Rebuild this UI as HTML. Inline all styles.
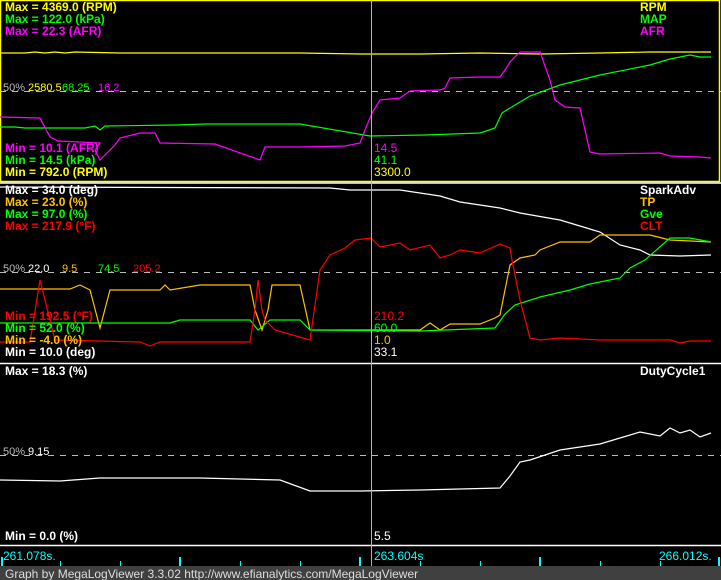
<!DOCTYPE html>
<html><head><meta charset="utf-8"><style>
html,body{margin:0;padding:0;background:#000;width:721px;height:580px;overflow:hidden}
svg{display:block}
text{font-family:"Liberation Sans",Arial,sans-serif;font-size:12px}
.b{font-weight:bold}
.s{font-size:11px}
</style></head><body>
<svg width="721" height="580" viewBox="0 0 721 580" xmlns="http://www.w3.org/2000/svg">
<rect width="721" height="580" fill="#000"/>
<rect x="0.5" y="0.5" width="719" height="181" fill="none" stroke="#ffff00" stroke-width="1.5"/>
<line x1="0" y1="183" x2="721" y2="183" stroke="#fff" stroke-width="1.5"/>
<line x1="0" y1="363.5" x2="721" y2="363.5" stroke="#fff" stroke-width="1.5"/>
<line x1="0" y1="545.5" x2="721" y2="545.5" stroke="#fff" stroke-width="1.5"/>
<g stroke="#bbb" stroke-dasharray="6,6" stroke-width="1" shape-rendering="crispEdges">
<line x1="0" y1="91.5" x2="721" y2="91.5"/>
<line x1="0" y1="272.5" x2="721" y2="272.5"/>
<line x1="0" y1="455.5" x2="721" y2="455.5"/>
</g>
<g fill="none" stroke-width="1.2">
<polyline stroke="#ffff00" points="0,53 25,53 35,52 45,53 55,52 65,53 75,52 120,53 180,53 300,53 360,54 420,54 480,53 540,54 600,53 650,52 680,52 711,52"/>
<polyline stroke="#00ff00" points="0,127 15,127 25,128 85,128 95,126 100,130 105,126 175,125 205,124 300,124 370,136 425,135 480,133 495,128 502,113 510,108 530,96 560,85 600,75 650,65 670,59 690,55 700,57 711,57"/>
<polyline stroke="#ff00ff" points="0,117 40,118 50,137 58,141 100,143 95,150 100,160 115,145 120,138 140,133 155,133 160,143 215,144 260,160 265,147 300,147 345,146 360,143 365,130 372,113 380,100 400,98 410,91 440,90 445,88 450,78 480,77 500,77 505,70 510,62 520,52 540,52 550,80 555,100 565,107 580,108 590,152 600,154 660,153 670,156 700,157 711,158"/>
<polyline stroke="#ffffff" points="0,187 330,188 350,190 400,190 420,193 440,196 460,202 480,205 500,208 520,213 560,220 580,226 600,232 620,245 640,250 650,255 680,256 711,255"/>
<polyline stroke="#ffc000" points="0,289 70,289 80,285 90,290 100,328 110,290 160,290 165,285 170,290 200,285 250,285 255,310 262,330 268,310 272,285 300,285 310,330 420,330 430,323 440,330 450,324 480,324 495,318 500,315 510,265 520,258 535,255 540,250 560,242 590,242 600,235 650,235 670,240 711,242"/>
<polyline stroke="#00ff00" points="0,323 170,323 180,320 250,320 258,330 270,320 300,320 310,330 420,331 495,328 505,314 515,305 540,297 570,290 590,284 620,278 630,268 645,260 670,238 690,238 711,242"/>
<polyline stroke="#ff0000" points="0,342 30,342 40,280 45,300 55,340 140,342 150,346 160,342 250,342 255,310 258,280 262,310 265,320 275,330 310,340 320,270 330,255 345,248 355,240 371,238 380,247 400,243 410,250 430,245 440,258 450,255 460,250 480,253 500,244 510,248 512,260 520,300 530,338 540,340 560,338 600,340 670,340 680,343 690,341 711,341"/>
<polyline stroke="#ffffff" points="0,480 60,481 100,478 200,478 280,480 310,491 360,491 420,490 500,488 510,476 520,462 530,460 560,450 600,444 620,438 640,432 660,436 670,428 680,433 690,430 700,437 711,433"/>
</g>
<rect x="371" y="0" width="1" height="566" fill="#00ffff"/>
<text x="5" y="11" class="b" fill="#ffff00">Max = 4369.0 (RPM)</text>
<text x="5" y="23" class="b" fill="#00ff00">Max = 122.0 (kPa)</text>
<text x="5" y="35" class="b" fill="#ff00ff">Max = 22.3 (AFR)</text>
<text x="640" y="11" class="b" fill="#ffff00">RPM</text>
<text x="640" y="23" class="b" fill="#00ff00">MAP</text>
<text x="640" y="35" class="b" fill="#ff00ff">AFR</text>
<text x="3" y="91" class="s" fill="#bbb">50%</text>
<text x="28" y="91" class="s" fill="#ffff00">2580.5</text>
<text x="62" y="91" class="s" fill="#00ff00">68.25</text>
<text x="98" y="91" class="s" fill="#ff00ff">16.2</text>
<text x="5" y="152" class="b" fill="#ff00ff">Min = 10.1 (AFR)</text>
<text x="5" y="164" class="b" fill="#00ff00">Min = 14.5 (kPa)</text>
<text x="5" y="176" class="b" fill="#ffff00">Min = 792.0 (RPM)</text>
<text x="374" y="152" fill="#ff00ff">14.5</text>
<text x="374" y="164" fill="#00ff00">41.1</text>
<text x="374" y="176" fill="#ffff00">3300.0</text>
<text x="5" y="194" class="b" fill="#fff">Max = 34.0 (deg)</text>
<text x="5" y="206" class="b" fill="#ffc000">Max = 23.0 (%)</text>
<text x="5" y="218" class="b" fill="#00ff00">Max = 97.0 (%)</text>
<text x="5" y="230" class="b" fill="#ff0000">Max = 217.9 (°F)</text>
<text x="640" y="194" class="b" fill="#fff">SparkAdv</text>
<text x="640" y="206" class="b" fill="#ffc000">TP</text>
<text x="640" y="218" class="b" fill="#00ff00">Gve</text>
<text x="640" y="230" class="b" fill="#ff0000">CLT</text>
<text x="3" y="272" class="s" fill="#bbb">50%</text>
<text x="28" y="272" class="s" fill="#fff">22.0</text>
<text x="62" y="272" class="s" fill="#ffc000">9.5</text>
<text x="98" y="272" class="s" fill="#00ff00">74.5</text>
<text x="133" y="272" class="s" fill="#ff0000">205.2</text>
<text x="5" y="320" class="b" fill="#ff0000">Min = 192.5 (°F)</text>
<text x="5" y="332" class="b" fill="#00ff00">Min = 52.0 (%)</text>
<text x="5" y="344" class="b" fill="#ffc000">Min = -4.0 (%)</text>
<text x="5" y="356" class="b" fill="#fff">Min = 10.0 (deg)</text>
<text x="374" y="320" fill="#ff0000">210.2</text>
<text x="374" y="332" fill="#00ff00">60.0</text>
<text x="374" y="344" fill="#ffc000">1.0</text>
<text x="374" y="356" fill="#fff">33.1</text>
<text x="5" y="375" class="b" fill="#fff">Max = 18.3 (%)</text>
<text x="640" y="375" class="b" fill="#fff">DutyCycle1</text>
<text x="3" y="455" class="s" fill="#bbb">50%</text>
<text x="28" y="455" class="s" fill="#fff">9.15</text>
<text x="5" y="540" class="b" fill="#fff">Min = 0.0 (%)</text>
<text x="374" y="540" fill="#fff">5.5</text>
<text x="3" y="560" fill="#00ffff">261.078s.</text>
<text x="374" y="560" fill="#00ffff">263.604s</text>
<text x="659" y="560" fill="#00ffff">266.012s.</text>
<g fill="#00ffff">
<rect x="1" y="557" width="2" height="9"/>
<rect x="60" y="561" width="1" height="5"/>
<rect x="120" y="561" width="1" height="5"/>
<rect x="179" y="557" width="2" height="9"/>
<rect x="240" y="561" width="1" height="5"/>
<rect x="300" y="561" width="1" height="5"/>
<rect x="359" y="557" width="2" height="9"/>
<rect x="420" y="561" width="1" height="5"/>
<rect x="480" y="561" width="1" height="5"/>
<rect x="539" y="557" width="2" height="9"/>
<rect x="600" y="561" width="1" height="5"/>
<rect x="660" y="561" width="1" height="5"/>
<rect x="718" y="557" width="2" height="9"/>
</g>
<rect x="0" y="566" width="721" height="14" fill="#404040"/>
<text x="5" y="578" fill="#ddd">Graph by MegaLogViewer 3.3.02 http://www.efianalytics.com/MegaLogViewer</text>
</svg>
</body></html>
